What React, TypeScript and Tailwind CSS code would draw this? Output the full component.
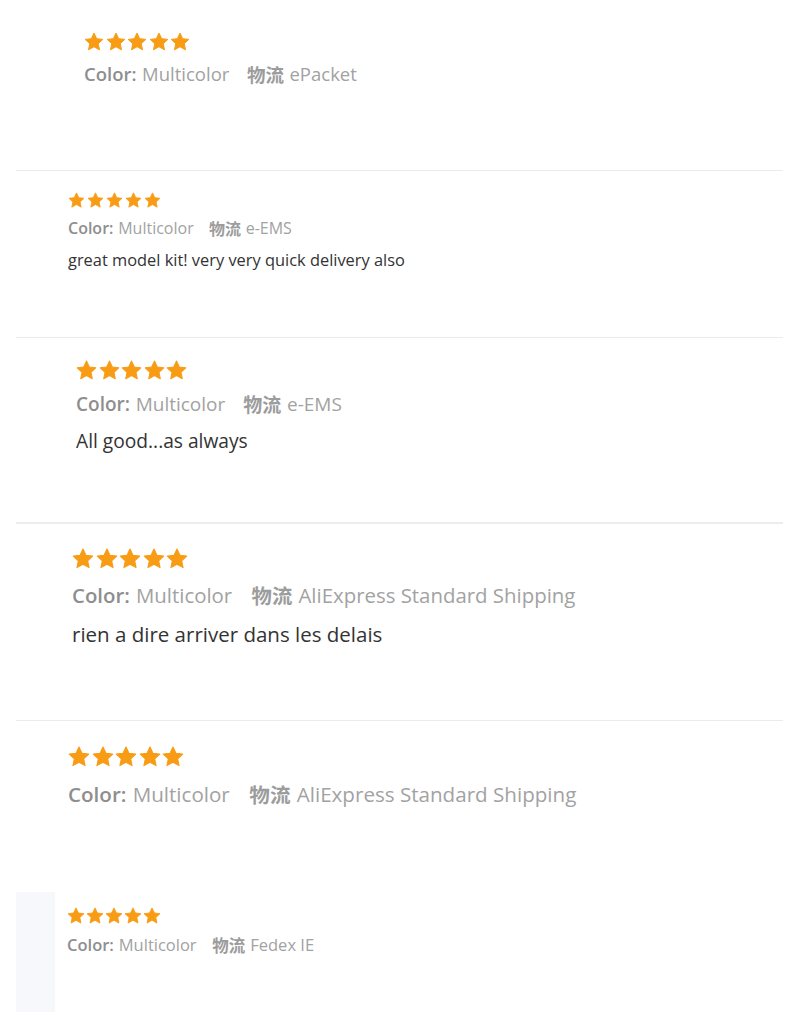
import type { ReactNode } from 'react'

function Star({ size }: { size: number }) {
  return (
    <svg width={size} height={size} viewBox="0 0 24 24" className="shrink-0">
      <path
        d="M12 1.2l3.2 6.8 7.4.9-5.5 5.1 1.5 7.4L12 17.7l-6.6 3.7 1.5-7.4-5.5-5.1 7.4-.9z"
        fill="#f89c15"
        stroke="#f89c15"
        strokeWidth="1.2"
        strokeLinejoin="round"
      />
    </svg>
  )
}

function Stars({ size, pitch }: { size: number; pitch: number }) {
  return (
    <div className="flex" style={{ gap: pitch - size }}>
      {[0, 1, 2, 3, 4].map((i) => (
        <Star key={i} size={size} />
      ))}
    </div>
  )
}

function Meta({ shipping, className }: { shipping: string; className: string }) {
  return (
    <div className={`flex items-center whitespace-nowrap ${className}`}>
      <span className="font-semibold text-[#8e8e8e]">Color:</span>
      <span className="ml-[0.3em] text-[#a2a2a2]">Multicolor</span>
      <span className="ml-[0.95em] font-bold text-[#9c9c9c] [font-family:'Noto_Sans_CJK_SC',sans-serif]">物流</span>
      <span className="ml-[0.3em] text-[#a2a2a2]">{shipping}</span>
    </div>
  )
}

function Section({ children, className }: { children: ReactNode; className: string }) {
  return <section className={className}>{children}</section>
}

export default function App() {
  return (
    <div className="w-[800px] h-[1030px] overflow-hidden bg-white pl-4 pr-[17px] [font-family:'Open_Sans','Noto_Sans_CJK_SC',sans-serif]">
      <Section className="h-[171px] border-b border-[#ebebeb] pl-[68px] pt-[32px]">
        <Stars size={20} pitch={21.5} />
        <Meta shipping="ePacket" className="mt-[10px] text-[18.5px] leading-[24px]" />
      </Section>

      <Section className="h-[167px] border-b border-[#ebebeb] pl-[52px] pt-[21px]">
        <Stars size={17} pitch={19} />
        <Meta shipping="e-EMS" className="mt-[8px] text-[16px] leading-[22px]" />
        <p className="mt-[10px] text-[16.4px] leading-[22px] text-[#333]">great model kit! very very quick delivery also</p>
      </Section>

      <Section className="h-[186px] border-b-2 border-[#ececec] pl-[60px] pt-[22px]">
        <Stars size={21} pitch={22.5} />
        <Meta shipping="e-EMS" className="mt-[10px] text-[19px] leading-[26px]" />
        <p className="mt-[11px] text-[19.2px] leading-[26px] text-[#333]">All good...as always</p>
      </Section>

      <Section className="h-[197px] border-b border-[#ebebeb] pl-[56px] pt-[24px]">
        <Stars size={22} pitch={23.5} />
        <Meta shipping="AliExpress Standard Shipping" className="mt-[11px] text-[20.4px] leading-[28px]" />
        <p className="mt-[11px] text-[20.5px] leading-[28px] text-[#333]">rien a dire arriver dans les delais</p>
      </Section>

      <Section className="h-[171px] pl-[52px] pt-[25px]">
        <Stars size={22} pitch={23.5} />
        <Meta shipping="AliExpress Standard Shipping" className="mt-[12px] text-[20.6px] leading-[28px]" />
      </Section>

      <div className="flex">
        <div className="w-[39px] h-[120px] bg-[#f7f8fb]" />
        <div className="ml-[12px] pt-[15px]">
          <Stars size={18} pitch={19} />
          <Meta shipping="Fedex IE" className="mt-[9px] text-[16.5px] leading-[22px]" />
        </div>
      </div>
    </div>
  )
}
